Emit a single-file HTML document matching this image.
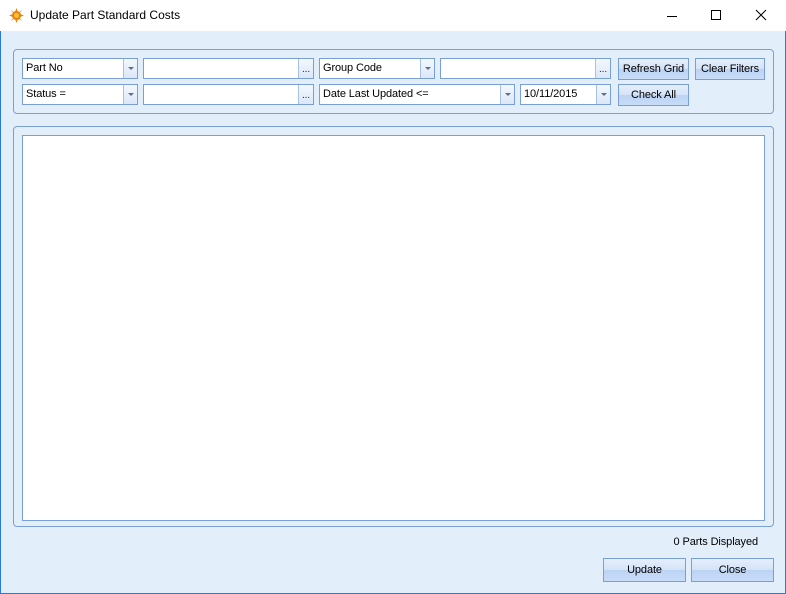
<!DOCTYPE html>
<html><head><style>
*{margin:0;padding:0;box-sizing:border-box}
body{width:786px;height:594px;overflow:hidden;font-family:"Liberation Sans",sans-serif;font-size:11px;letter-spacing:-0.1px;color:#000;background:#e3eefb;position:relative}
.t{position:absolute;left:0;top:0;width:786px;height:31px;background:#fff}
.t span{position:absolute;left:30px;top:8px;font-size:12px;color:#000;letter-spacing:0}
.wb{position:absolute;top:31px;width:1px;height:563px;background:#2b79d8}
.a{position:absolute}
.box{position:absolute;border:1px solid #7a9fd6;border-radius:4px}
.in{position:absolute;background:#fff;border:1px solid #7a9fd6;height:21px;padding:3px 0 0 3px;white-space:nowrap}
.ar{position:absolute;right:0;top:0;width:14px;height:19px;border-left:1px solid #a9c0e6;background:linear-gradient(#f4f8fd,#dbe7f8)}
.ar:after{content:"";position:absolute;left:4px;top:8px;border:3px solid transparent;border-top:3px solid #5a6f8e}
.el{position:absolute;right:0;top:0;width:15px;height:19px;border-left:1px solid #a9c0e6;background:linear-gradient(#f4f8fd,#dbe7f8);font-size:10px;text-align:center;line-height:22px;color:#223}
.btn{position:absolute;border:1px solid #7a9fd6;background:linear-gradient(#e6effc 0%,#d4e3f8 50%,#bcd3f4 51%,#c8dcf7 100%);text-align:center;line-height:20px;white-space:nowrap}
</style></head><body>
<div class="t"><svg style="position:absolute;left:9px;top:8px" width="15" height="15" viewBox="0 0 15 15"><g fill="#e8840c"><circle cx="7.5" cy="7.5" r="4.5"/><path d="M7.5 0L9 4H6zM7.5 15L6 11H9zM0 7.5L4 6V9zM15 7.5L11 9V6zM2 2L5.5 4.5 4.5 5.5zM13 13L9.5 10.5 10.5 9.5zM13 2L10.5 5.5 9.5 4.5zM2 13L4.5 9.5 5.5 10.5z"/></g><circle cx="7.5" cy="7.5" r="2.5" fill="#f7c23a"/></svg><span>Update Part Standard Costs</span>
<svg style="position:absolute;left:666px;top:10px" width="12" height="12"><line x1="1" y1="6.5" x2="11" y2="6.5" stroke="#000"/></svg>
<svg style="position:absolute;left:710px;top:9px" width="12" height="12"><rect x="1.5" y="1.5" width="9" height="9" fill="none" stroke="#000"/></svg>
<svg style="position:absolute;left:755px;top:9px" width="12" height="12"><path d="M1 1L11 11M11 1L1 11" stroke="#000"/></svg>
</div>
<div class="wb" style="left:0"></div><div class="wb" style="left:785px"></div>
<div class="a" style="left:0;top:593px;width:786px;height:1px;background:#2b79d8"></div>

<div class="box" style="left:13px;top:49px;width:761px;height:65px"></div>
<div class="in" style="left:22px;top:58px;width:116px">Part No<div class="ar"></div></div>
<div class="in" style="left:143px;top:58px;width:171px"><div class="el">...</div></div>
<div class="in" style="left:319px;top:58px;width:116px">Group Code<div class="ar"></div></div>
<div class="in" style="left:440px;top:58px;width:171px"><div class="el">...</div></div>
<div class="btn" style="left:618px;top:58px;width:71px;height:22px">Refresh Grid</div>
<div class="btn" style="left:695px;top:58px;width:70px;height:22px">Clear Filters</div>
<div class="in" style="left:22px;top:84px;width:116px">Status =<div class="ar"></div></div>
<div class="in" style="left:143px;top:84px;width:171px"><div class="el">...</div></div>
<div class="in" style="left:319px;top:84px;width:196px">Date Last Updated &lt;=<div class="ar"></div></div>
<div class="in" style="left:520px;top:84px;width:91px">10/11/2015<div class="ar"></div></div>
<div class="btn" style="left:618px;top:84px;width:71px;height:22px">Check All</div>

<div class="box" style="left:13px;top:126px;width:761px;height:401px"></div>
<div class="a" style="left:22px;top:135px;width:743px;height:386px;background:#fff;border:1px solid #7a9fd6"></div>

<div class="a" style="right:28px;top:536px">0 Parts Displayed</div>
<div class="btn" style="left:603px;top:558px;width:83px;height:24px;line-height:22px">Update</div>
<div class="btn" style="left:691px;top:558px;width:83px;height:24px;line-height:22px">Close</div>
</body></html>
